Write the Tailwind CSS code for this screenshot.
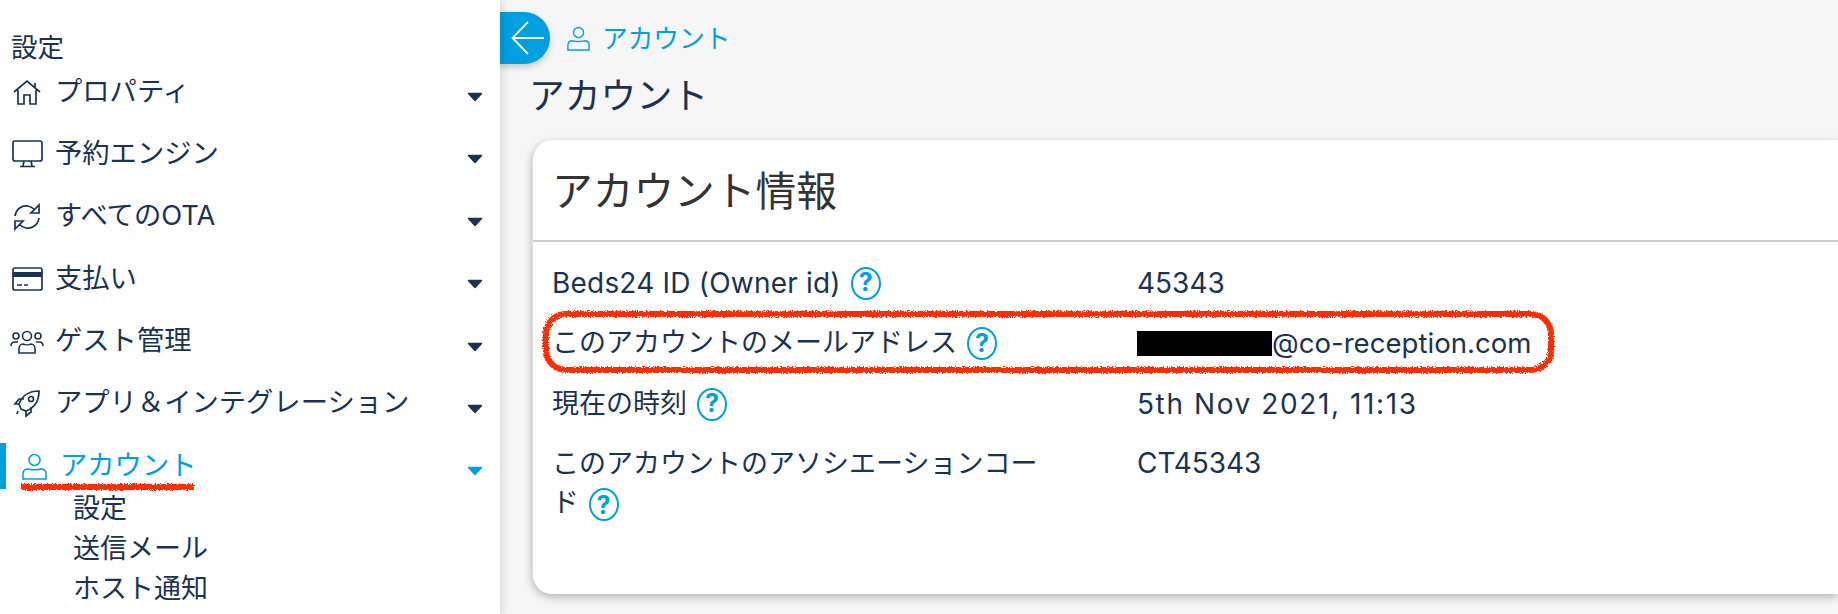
<!DOCTYPE html>
<html lang="ja">
<head>
  <meta charset="UTF-8" />
  <meta name="viewport" content="width=device-width, initial-scale=1.0" />
  <title>アカウント</title>
  <script src="https://cdn.jsdelivr.net/npm/@tailwindcss/browser@4"></script>
</head>
<body class="relative h-[614px] w-[1838px] overflow-hidden bg-[#f6f6f6] font-['Inter','Noto_Sans_CJK_JP',sans-serif] text-[#1b3350]">
  <div class="flex h-full">
    <!-- sidebar -->
    <aside class="relative z-10 h-full w-[500px] shrink-0 bg-white pt-[29px] shadow-[2px_0_8px_rgba(0,0,0,0.14)]">
      <div class="pl-[11px] text-[26.5px] leading-[36px]">設定</div>
      <ul class="mt-[4px]">
        <li class="mb-[16.4px] flex h-[46px] items-center pr-[17px]">
          <span class="flex w-[55px] justify-center pr-[1px]">
            <svg class="h-[26px] w-[28px]" viewBox="0 0 28 26" fill="none" stroke="currentColor" stroke-width="1.7"><path d="M1 13 14 2l13 11M22 4v5M5 11v14h6v-9h6v9h6V11"/></svg>
          </span>
          <span class="flex-1 text-[27.3px]">プロパティ</span>
          <svg class="mt-[10px] h-[10px] w-[16px]" viewBox="0 0 16 10" fill="currentColor" stroke="currentColor" stroke-width="1.500" stroke-linejoin="round"><path d="M1.500 1.500h13L8 8.500z"/></svg>
        </li>
        <li class="mb-[16.4px] flex h-[46px] items-center pr-[17px]">
          <span class="flex w-[55px] justify-center pr-[1px]">
            <svg class="h-[28px] w-[31px]" viewBox="0 0 31 28" fill="none" stroke="currentColor" stroke-width="1.7"><rect x="1" y="1" width="29" height="20" rx="2"/><path d="M12 21l-1 5M19 21l1 5M8 26.500h15"/></svg>
          </span>
          <span class="flex-1 text-[27.3px]">予約エンジン</span>
          <svg class="mt-[10px] h-[10px] w-[16px]" viewBox="0 0 16 10" fill="currentColor" stroke="currentColor" stroke-width="1.500" stroke-linejoin="round"><path d="M1.500 1.500h13L8 8.500z"/></svg>
        </li>
        <li class="mb-[16.4px] flex h-[46px] items-center pr-[17px]">
          <span class="flex w-[55px] justify-center pr-[1px]">
            <svg class="h-[28px] w-[28px]" viewBox="0 0 28 28" fill="none" stroke="currentColor" stroke-width="1.7"><path d="M2 13C3 6 9 2 15 3c3 .5 5 2 7 4M26 2v8h-8zM26 15c-1 7-7 11-13 10-3-.5-5-2-7-4M2 26v-8h8z"/></svg>
          </span>
          <span class="flex-1 text-[27.3px]">すべてのOTA</span>
          <svg class="mt-[10px] h-[10px] w-[16px]" viewBox="0 0 16 10" fill="currentColor" stroke="currentColor" stroke-width="1.500" stroke-linejoin="round"><path d="M1.500 1.500h13L8 8.500z"/></svg>
        </li>
        <li class="mb-[16.4px] flex h-[46px] items-center pr-[17px]">
          <span class="flex w-[55px] justify-center pr-[1px]">
            <svg class="h-[24px] w-[31px]" viewBox="0 0 31 24" fill="none" stroke="currentColor"><rect x="1" y="1" width="29" height="22" rx="2" stroke-width="1.7"/><path d="M1 7.500h29" stroke-width="5"/><path d="M5 18h5M12 18h4" stroke-width="1.500"/></svg>
          </span>
          <span class="flex-1 text-[27.3px]">支払い</span>
          <svg class="mt-[10px] h-[10px] w-[16px]" viewBox="0 0 16 10" fill="currentColor" stroke="currentColor" stroke-width="1.500" stroke-linejoin="round"><path d="M1.500 1.500h13L8 8.500z"/></svg>
        </li>
        <li class="mb-[16.4px] flex h-[46px] items-center pr-[17px]">
          <span class="flex w-[55px] justify-center pr-[1px]">
            <svg class="h-[24px] w-[34px]" viewBox="0 0 34 24" fill="none" stroke="currentColor" stroke-width="1.6"><circle cx="17" cy="6" r="4.500"/><circle cx="6" cy="6" r="3"/><circle cx="28" cy="6" r="3"/><path d="M9 23v-4c0-3 2-5 4-5 2 1 6 1 8 0 2 0 4 2 4 5v4zM1 16c0-3 2-4 4-4h3M33 16c0-3-2-4-4-4h-3"/></svg>
          </span>
          <span class="flex-1 text-[27.3px]">ゲスト管理</span>
          <svg class="mt-[10px] h-[10px] w-[16px]" viewBox="0 0 16 10" fill="currentColor" stroke="currentColor" stroke-width="1.500" stroke-linejoin="round"><path d="M1.500 1.500h13L8 8.500z"/></svg>
        </li>
        <li class="mb-[16.4px] flex h-[46px] items-center pr-[17px]">
          <span class="flex w-[55px] justify-center pr-[1px]">
            <svg class="h-[28px] w-[28px]" viewBox="0 0 28 28" fill="none" stroke="currentColor" stroke-width="1.7"><path d="M8 19 6 14c3-8 10-13 20-13 0 10-5 17-13 20zM6 14H2l4-5h5M13 21v5l5-4v-5M5 21l-1 3"/><circle cx="18" cy="9" r="2.500"/></svg>
          </span>
          <span class="flex-1 text-[27.3px]">アプリ＆インテグレーション</span>
          <svg class="mt-[10px] h-[10px] w-[16px]" viewBox="0 0 16 10" fill="currentColor" stroke="currentColor" stroke-width="1.500" stroke-linejoin="round"><path d="M1.500 1.500h13L8 8.500z"/></svg>
        </li>
        <li class="flex h-[46px] items-center border-l-[6px] border-[#00a0df] pr-[17px] text-[#00a0df]">
          <span class="flex w-[54px] justify-center pl-[2px]">
            <svg class="h-[27px] w-[25px]" viewBox="0 0 25 27" fill="none" stroke="currentColor" stroke-width="1.500"><circle cx="12.500" cy="7" r="5.500"/><path d="M1 26v-5c0-3 2-5 5-5 4 1 9 1 13 0 3 0 5 2 5 5v5z"/></svg>
          </span>
          <span class="flex-1 text-[27.3px]">アカウント</span>
          <svg class="mt-[10px] h-[10px] w-[16px]" viewBox="0 0 16 10" fill="currentColor" stroke="currentColor" stroke-width="1.500" stroke-linejoin="round"><path d="M1.500 1.500h13L8 8.500z"/></svg>
        </li>
        <li class="pl-[73px] text-[27px] leading-[40px]">設定</li>
        <li class="pl-[73px] text-[27px] leading-[40px]">送信メール</li>
        <li class="pl-[73px] text-[27px] leading-[40px]">ホスト通知</li>
      </ul>
    </aside>

    <!-- main -->
    <main class="min-w-0 flex-1">
      <div class="mt-[12px] flex h-[52px] items-center">
        <div class="flex h-[52px] w-[50px] items-center justify-center rounded-r-[26px] bg-[#009fdf] pl-[6px] shadow-[0_3px_6px_rgba(0,0,0,0.2)]">
          <svg class="h-[34px] w-[34px] shrink-0" viewBox="0 0 34 34" fill="none" stroke="white" stroke-width="1.800"><path d="M33 17H2M17 1 1.500 17 17 33"/></svg>
        </div>
        <svg class="ml-[17px] h-[25px] w-[23px] text-[#00a0df]" viewBox="0 0 25 27" fill="none" stroke="currentColor" stroke-width="1.500"><circle cx="12.500" cy="7" r="5.500"/><path d="M1 26v-5c0-3 2-5 5-5 4 1 9 1 13 0 3 0 5 2 5 5v5z"/></svg>
        <span class="ml-[12px] pt-[2px] text-[25.7px] text-[#00a0df]">アカウント</span>
      </div>
      <h1 class="ml-[29px] mt-[7px] text-[35.8px] leading-[50px]">アカウント</h1>
      <section class="ml-[32px] mt-[19px] h-[454px] rounded-l-[20px] border-l border-[#ddd] bg-white shadow-[0_3px_8px_rgba(0,0,0,0.28)]">
        <h2 class="flex h-[102px] items-center border-b-2 border-[#ccc] pl-[19px] pt-[4px] text-[40.7px] text-[#333]">アカウント情報</h2>
        <div class="pl-[19px] pt-[11px] text-[27px]">
          <div class="grid h-[60px] grid-cols-[585px_1fr] items-center">
            <div class="flex items-center gap-[10px]"><span class="text-[28px] tracking-[0.2px]">Beds24 ID (Owner id)</span>
              <span class="flex h-[33px] w-[30px] items-center justify-center rounded-[50%] border-2 border-[#009fdf] text-[25px] font-bold text-[#009fdf]">?</span>
            </div>
            <div class="text-[28px]">45343</div>
          </div>
          <div class="grid h-[61px] grid-cols-[585px_1fr] items-center">
            <div class="flex items-center gap-[10px]">このアカウントのメールアドレス
              <span class="flex h-[33px] w-[30px] items-center justify-center rounded-[50%] border-2 border-[#009fdf] text-[25px] font-bold text-[#009fdf]">?</span>
            </div>
            <div class="flex items-center text-[27.6px]"><span class="h-[25px] w-[135px] bg-black"></span>@co-reception.com</div>
          </div>
          <div class="grid h-[60px] grid-cols-[585px_1fr] items-center">
            <div class="flex items-center gap-[10px]">現在の時刻
              <span class="flex h-[33px] w-[30px] items-center justify-center rounded-[50%] border-2 border-[#009fdf] text-[25px] font-bold text-[#009fdf]">?</span>
            </div>
            <div class="text-[28px] tracking-[1.6px]">5th Nov 2021, 11:13</div>
          </div>
          <div class="grid grid-cols-[585px_1fr] pt-[10px]">
            <div class="w-[495px] leading-[39px]">このアカウントのアソシエーションコード
              <span class="ml-[2px] inline-flex h-[33px] w-[30px] items-center justify-center rounded-[50%] border-2 border-[#009fdf] align-middle text-[25px] leading-[30px] font-bold text-[#009fdf]">?</span>
            </div>
            <div class="text-[28px] leading-[39px]">CT45343</div>
          </div>
        </div>
      </section>
    </main>
  </div>

  <!-- red marker annotations drawn over the screenshot -->
  <svg class="pointer-events-none absolute left-0 top-0 z-20 h-[614px] w-[1838px]" viewBox="0 0 1838 614" fill="none">
    <filter id="rough" filterUnits="userSpaceOnUse" x="0" y="0" width="1838" height="614">
      <feTurbulence type="fractalNoise" baseFrequency="0.8" numOctaves="2" seed="4"/>
      <feDisplacementMap in="SourceGraphic" scale="5"/>
    </filter>
    <rect x="546" y="314" width="1005" height="56" rx="20" stroke="#ff2d00" stroke-width="6" filter="url(#rough)"/>
    <rect x="21" y="484" width="173" height="6" fill="#ff2d00" filter="url(#rough)"/>
  </svg>
</body>
</html>
